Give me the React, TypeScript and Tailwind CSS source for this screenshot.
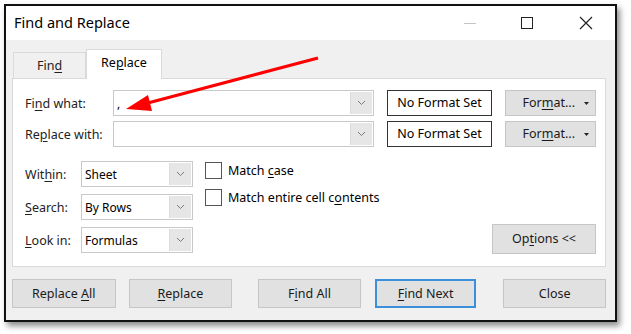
import React from "react";

const font = "font-['Noto_Sans','Open_Sans',sans-serif]";

// underlined access-key letter
function U({ children }: { children: React.ReactNode }) {
    return <span className="underline underline-offset-2 decoration-1">{children}</span>;
}

function Chevron() {
    return (
        <svg width="9" height="6" viewBox="0 0 9 6" className="block">
            <path d="M1 1 L4.5 4.5 L8 1" fill="none" stroke="#7a7a7a" strokeWidth="1" />
        </svg>
    );
}

function Combo({ value, width }: { value: string; width: string }) {
    return (
        <div className={`${width} h-[26px] flex border border-[#c9c9c9] bg-white`}>
            <div className="flex-1 flex items-center pl-[3px] pt-[2px] text-[12px] text-black">{value}</div>
            <div className="w-[22px] flex items-center justify-center bg-[#e6e6e6] border-l border-[#dcdcdc] m-[1px]">
                <Chevron />
            </div>
        </div>
    );
}

function Btn({
    children,
    className = "",
    primary = false,
}: {
    children: React.ReactNode;
    className?: string;
    primary?: boolean;
}) {
    return (
        <div
            className={`flex items-center justify-center bg-[#e1e1e1] text-[12.5px] text-[#1a1a1a] ${
                primary ? "border-2 border-[#3c8fd9]" : "border border-[#c6c6c6]"
            } ${className}`}
        >
            <span className="pt-[1px]">{children}</span>
        </div>
    );
}

function FormatBtn() {
    return (
        <div className="w-[91px] h-[26px] ml-[13px] flex items-center justify-end pr-[6px] gap-[9px] bg-[#e1e1e1] border border-[#c6c6c6] text-[12.5px] text-[#1a1a1a]">
            <span className="pt-[1px]">
                For<U>m</U>at...
            </span>
            <svg width="5" height="3" viewBox="0 0 5 3">
                <path d="M0 0 H5 L2.5 3 Z" fill="#222" />
            </svg>
        </div>
    );
}

function Check({ children }: { children: React.ReactNode }) {
    return (
        <div className="flex items-center h-[17px] gap-[6px] text-[12.5px] text-black">
            <div className="w-[17px] h-[17px] border border-[#555] bg-white" />
            <span className="pt-[1px]">{children}</span>
        </div>
    );
}

function FormatRow({ label, value }: { label: React.ReactNode; value: string }) {
    return (
        <div className="flex items-center h-[26px]">
            <span className="w-[88px] pt-[3px] text-[12.5px] text-[#222]">{label}</span>
            <Combo value={value} width="w-[261px]" />
            <div className="w-[105px] h-[26px] ml-[13px] border border-[#333] flex items-center justify-center pt-[1px] text-[12.5px] text-black">
                No Format Set
            </div>
            <FormatBtn />
        </div>
    );
}

export default function App() {
    const selects = [
        { label: <>Wit<U>h</U>in:</>, value: "Sheet" },
        { label: <><U>S</U>earch:</>, value: "By Rows" },
        { label: <><U>L</U>ook in:</>, value: "Formulas" },
    ];

    return (
        <div className={`relative w-[631px] h-[334px] bg-white pl-[4px] pt-[4px] ${font}`}>
            <div className="w-[613px] h-[318px] border-2 border-[#111] flex flex-col shadow-[3px_4px_6px_rgba(0,0,0,0.45)]">
                {/* title bar */}
                <div className="h-[34px] bg-white flex items-center pl-[8px] shrink-0">
                    <span className="text-[14.5px] text-black">Find and Replace</span>
                    <div className="ml-auto flex items-center h-full">
                        <div className="w-[12px] h-px bg-[#c4c4c4] mr-[45px]" />
                        <div className="w-[12px] h-[12px] border border-[#222] mr-[46px]" />
                        <svg width="14" height="14" viewBox="0 0 14 14" className="mr-[22px]">
                            <path d="M1 1 L13 13 M13 1 L1 13" stroke="#222" strokeWidth="1.2" />
                        </svg>
                    </div>
                </div>

                {/* body */}
                <div className="flex-1 bg-[#f0f0f0] pl-[6px] pr-[9px] flex flex-col">
                    {/* tabs */}
                    <div className="h-[38px] flex items-end">
                        <div className="ml-[1px] w-[73px] h-[26px] bg-[#f0f0f0] border border-b-0 border-[#dadada] flex items-center justify-center pt-[1px] text-[12.5px] text-[#222]">
                            <span>
                                Fin<U>d</U>
                            </span>
                        </div>
                        <div className="w-[76px] h-[30px] bg-white border border-b-0 border-[#dadada] -mb-px relative z-10 flex items-center justify-center text-[12.5px] text-black pb-[2px]">
                            <span>
                                Re<U>p</U>lace
                            </span>
                        </div>
                    </div>

                    {/* panel */}
                    <div className="h-[189px] bg-white border border-[#dadada] pt-[11px] pl-[12px] pr-[9px] flex flex-col">
                        <FormatRow label={<>Fi<U>n</U>d what:</>} value="," />
                        <div className="mt-[5px]">
                            <FormatRow label={<>Re<U>p</U>lace with:</>} value="" />
                        </div>

                        <div className="flex mt-[14px]">
                            <div className="flex flex-col gap-[7px]">
                                {selects.map((row, i) => (
                                    <div key={i} className="flex items-center">
                                        <span className="w-[56px] pt-[2px] text-[12.5px] text-[#222]">{row.label}</span>
                                        <Combo value={row.value} width="w-[112px]" />
                                    </div>
                                ))}
                            </div>
                            <div className="flex flex-col gap-[10px] ml-[12px] mt-[1px]">
                                <Check>
                                    Match <U>c</U>ase
                                </Check>
                                <Check>
                                    Match entire cell c<U>o</U>ntents
                                </Check>
                            </div>
                            <Btn className="ml-auto self-end w-[104px] h-[30px] -mb-px">
                                Op<U>t</U>ions &lt;&lt;
                            </Btn>
                        </div>
                    </div>

                    {/* bottom buttons */}
                    <div className="flex mt-[12px] h-[29px]">
                        <Btn className="w-[104px]">
                            Replace <U>A</U>ll
                        </Btn>
                        <Btn className="w-[104px] ml-[13px]">
                            <U>R</U>eplace
                        </Btn>
                        <Btn className="w-[103px] ml-[26px]">
                            F<U>i</U>nd All
                        </Btn>
                        <Btn primary className="w-[102px] ml-[14px]">
                            <U>F</U>ind Next
                        </Btn>
                        <Btn className="w-[103px] ml-[27px]">Close</Btn>
                    </div>
                </div>
            </div>

            {/* red annotation arrow */}
            <svg className="absolute left-0 top-0 pointer-events-none" width="631" height="334">
                <line x1="318" y1="58" x2="144" y2="104" stroke="#f00" strokeWidth="3" />
                <polygon points="126,109 148,95 152,111" fill="#f00" />
            </svg>
        </div>
    );
}
